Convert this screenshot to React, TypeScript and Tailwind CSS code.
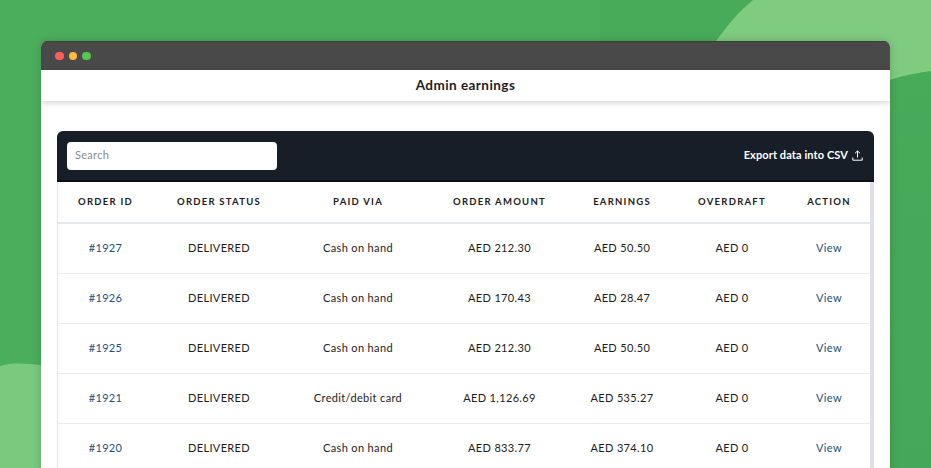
const font = { fontFamily: '"Lato", "Noto Sans", sans-serif' };

const columns = ["ORDER ID", "ORDER STATUS", "PAID VIA", "ORDER AMOUNT", "EARNINGS", "OVERDRAFT", "ACTION"];
const rows = [
  ["#1927", "Cash on hand", "AED 212.30", "AED 50.50"],
  ["#1926", "Cash on hand", "AED 170.43", "AED 28.47"],
  ["#1925", "Cash on hand", "AED 212.30", "AED 50.50"],
  ["#1921", "Credit/debit card", "AED 1,126.69", "AED 535.27"],
  ["#1920", "Cash on hand", "AED 833.77", "AED 374.10"],
];
const grid = "grid grid-cols-[95px_132px_146px_137px_108px_112px_82px] items-center text-center";

export default function App() {
  return (
    <div style={font} className="relative h-[468px] w-[931px] overflow-hidden bg-[#4bae5d]">
      <svg className="absolute inset-0" width="931" height="468" viewBox="0 0 931 468">
        <defs>
          <linearGradient id="shade" x1="0" y1="0" x2="0" y2="1">
            <stop offset="0" stopColor="#48ab5a" />
            <stop offset="1" stopColor="#45a858" />
          </linearGradient>
        </defs>
        <rect x="600" y="0" width="331" height="468" fill="url(#shade)" />
        <path d="M753 0 C738 12 726 27 714 44 L890 80 C904 75 918 73 931 71 L931 0 Z" fill="#7fcb80" />
        <path d="M0 366 C14 362 28 364 41 365 L41 468 L0 468 Z" fill="#7ac97f" />
      </svg>
      <div className="absolute left-[41px] top-[41px] w-[849px] h-[440px] rounded-t-[6px] bg-white overflow-hidden shadow-[0_0_10px_rgba(0,0,0,0.18)]">
        <div className="flex h-[29px] items-center gap-[5px] border-t border-t-[#3c3c3c] bg-[#494949] pl-[14px]">
          <span className="h-[8.5px] w-[8.5px] rounded-full bg-[#fb5f57]" />
          <span className="h-[8.5px] w-[8.5px] rounded-full bg-[#fdbb40]" />
          <span className="h-[8.5px] w-[8.5px] rounded-full bg-[#55c74d]" />
        </div>
        <div className="flex h-[31px] items-center justify-center bg-white text-[13.5px] font-bold text-[#1d1d1d] tracking-[0.45px] shadow-[0_2px_6px_rgba(0,0,0,0.16)]">
          Admin earnings
        </div>
        <div className="px-[16px] pt-[30px]">
          <div className="overflow-hidden rounded-t-[6px]">
            <div className="flex h-[51px] items-center justify-between border-b-2 border-b-[#0c1015] bg-[#171e27] pl-[10px] pr-[11px]">
              <div className="flex h-[28px] w-[210px] items-center rounded-[4px] bg-white pl-[8px] text-[11px] tracking-[0.3px] text-[#8a8a8a]">
                Search
              </div>
              <div className="flex items-center gap-[4px] text-[11px] font-bold tracking-[0.1px] text-white">
                Export data into CSV
                <svg width="11" height="11" viewBox="0 0 11 11" fill="none" stroke="white" strokeWidth="1">
                  <path d="M5.5 7.5V1M3 3.3L5.5 .9 8 3.3M.8 7.5v2.7h9.4V7.5" />
                </svg>
              </div>
            </div>
            <div className="border-l border-l-[#e3e5e8] border-r-[4px] border-r-[#dfe1e6] text-[#1c1c1c]">
              <div className={`${grid} h-[42px] border-b-2 border-b-[#e4e7eb] text-[9.5px] font-bold tracking-[1.25px]`}>
                {columns.map((c) => (
                  <div key={c}>{c}</div>
                ))}
              </div>
              {rows.map((r) => (
                <div key={r[0]} className={`${grid} h-[50px] border-b border-b-[#e9ebed] text-[11px] tracking-[0.35px]`}>
                  <div className="text-[#1c5080]">{r[0]}</div>
                  <div>DELIVERED</div>
                  <div>{r[1]}</div>
                  <div>{r[2]}</div>
                  <div>{r[3]}</div>
                  <div>AED 0</div>
                  <div className="text-[#1c5080]">View</div>
                </div>
              ))}
            </div>
          </div>
        </div>
      </div>
    </div>
  );
}
